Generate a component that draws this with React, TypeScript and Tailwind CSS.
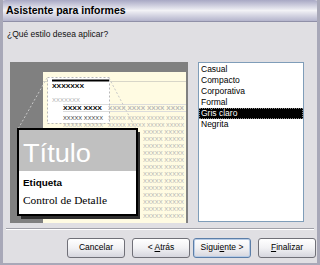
import React from 'react';

const styles = ['Casual', 'Compacto', 'Corporativa', 'Formal', 'Gris claro', 'Negrita'];

const F = 'Liberation Sans, sans-serif';

function Preview() {
  const rows = [117, 124, 131, 138, 145, 152, 159, 166, 173, 180, 187, 194, 201, 208, 215];
  return (
    <svg width="178" height="161" viewBox="10 62 178 161" className="block">
      <rect x="10" y="62" width="178" height="161" fill="#808080" />
      <rect x="43" y="72" width="143" height="151" fill="#fffbe2" />
      <line x1="43" y1="81.5" x2="186" y2="81.5" stroke="#d8d6c8" strokeWidth="1" />
      <rect x="48" y="77" width="62" height="46" fill="#ffffff" />
      <line x1="52" y1="80.5" x2="109" y2="80.5" stroke="#000" strokeWidth="2" />
      <text x="52" y="87.5" fontSize="6" fontFamily={F} fontWeight="bold" fill="#000" textLength="32" lengthAdjust="spacingAndGlyphs">XXXXXXX</text>
      <text x="52" y="101.5" fontSize="6" fontFamily={F} fill="#b0b0b0" textLength="28" lengthAdjust="spacingAndGlyphs">XXXXXXX</text>
      <line x1="63" y1="104.5" x2="186" y2="104.5" stroke="#dcdcdc" />
      <line x1="63" y1="111.5" x2="186" y2="111.5" stroke="#dcdcdc" />
      <text x="63" y="110" fontSize="6" fontFamily={F} fontWeight="bold" fill="#000" textLength="39" lengthAdjust="spacingAndGlyphs">XXXX XXXX</text>
      <text x="108" y="110" fontSize="6" fontFamily={F} fontWeight="bold" fill="#b8b8b8" textLength="76" lengthAdjust="spacingAndGlyphs">XXXX XXXX XXXX XXXX</text>
      {rows.map((y, i) =>
        y < 126 ? (
          <g key={y}>
            <text x="63" y={y + 2.5} fontSize="6" fontFamily={F} fill={i === 0 ? '#404040' : '#b4b4b4'} textLength="40" lengthAdjust="spacingAndGlyphs">
              XXXXX XXXXX
            </text>
            <text x="108" y={y + 2.5} fontSize="6" fontFamily={F} fill="#b4b4b4" textLength="76" lengthAdjust="spacingAndGlyphs">
              XXXXX XXXXX XXXXX XXXXX
            </text>
          </g>
        ) : (
          <text key={y} x="143" y={y + 2.5} fontSize="6" fontFamily={F} fill="#b4b4b4" textLength="41" lengthAdjust="spacingAndGlyphs">
            XXXXX XXXXX
          </text>
        )
      )}
      <rect x="47.5" y="77.5" width="62" height="46" fill="none" stroke="#b8b8b8" strokeDasharray="2 2" />
      <line x1="47" y1="78" x2="18" y2="129" stroke="#c8c8c8" strokeDasharray="2 2" />
      <line x1="109" y1="78" x2="136" y2="129" stroke="#c8c8c8" strokeDasharray="2 2" />
      <rect x="21" y="132" width="119" height="87" fill="#303030" />
      <rect x="18" y="129" width="119" height="86" fill="#ffffff" stroke="#000" strokeWidth="2" />
      <rect x="19" y="130" width="117" height="41" fill="#c0c0c0" />
      <text x="23" y="162" fontSize="25" fontFamily={F} fill="#ffffff" textLength="68" lengthAdjust="spacingAndGlyphs">Título</text>
      <text x="23" y="186" fontSize="9" fontFamily={F} fontWeight="bold" fill="#000" textLength="39" lengthAdjust="spacingAndGlyphs">Etiqueta</text>
      <text x="23" y="204" fontSize="10" fontFamily="Liberation Serif, serif" fill="#000" textLength="84" lengthAdjust="spacingAndGlyphs">Control de Detalle</text>
    </svg>
  );
}

function Button({ label, def }: { label: React.ReactNode; def?: boolean }) {
  return (
    <button
      className={`h-[20px] w-[58px] rounded-[3px] border bg-gradient-to-b from-[#ffffff] via-[#f1f1f4] to-[#d6d6de] text-[8.5px] text-black ${
        def ? 'border-[#5c7ea8] shadow-[inset_0_0_0_1px_#b8cce6]' : 'border-[#707078]'
      }`}
    >
      {label}
    </button>
  );
}

export default function App() {
  return (
    <div className="w-[320px] h-[265px] bg-[#e0dfe3] font-['Liberation_Sans',sans-serif] overflow-hidden flex flex-col border-x-[3px] border-b-[2px] border-[#a8a8b8]">
      {/* Title bar */}
      <div className="h-[22px] -mx-[3px] shrink-0 flex items-center px-[6px] rounded-t-[6px] bg-gradient-to-b from-[#a8a8c4] via-[#f2f2f6] to-[#b4b4cc] border-b border-[#9090a8]">
        <span className="text-[10.5px] font-bold text-black">Asistente para informes</span>
      </div>

      <div className="px-[4px] pt-[6px] text-[8.5px] text-[#111]">¿Qué estilo desea aplicar?</div>

      <div className="flex pt-[21px] pl-[7px]">
        <Preview />
        <div className="ml-[10px] w-[106px] h-[160px] bg-white border border-[#7f9db9] pt-[1px]">
          {styles.map((s) => (
            <div
              key={s}
              className={`h-[11px] leading-[11px] text-[8.5px] pl-[2px] ${
                s === 'Gris claro' ? 'bg-black text-white outline outline-1 outline-dotted outline-[#888] -outline-offset-1' : 'text-black'
              }`}
            >
              {s}
            </div>
          ))}
        </div>
      </div>

      <div className="mt-[5px] mx-[3px] border-t border-[#a0a0a8] border-b border-b-white" />

      <div className="flex justify-end gap-[7px] pt-[8px] pr-[1px]">
        <Button label="Cancelar" />
        <div className="flex gap-[3px]">
          <Button label={<>&lt; <u>A</u>trás</>} />
          <Button label={<>Sigui<u>e</u>nte &gt;</>} def />
        </div>
        <Button label={<><u>F</u>inalizar</>} />
      </div>
    </div>
  );
}
